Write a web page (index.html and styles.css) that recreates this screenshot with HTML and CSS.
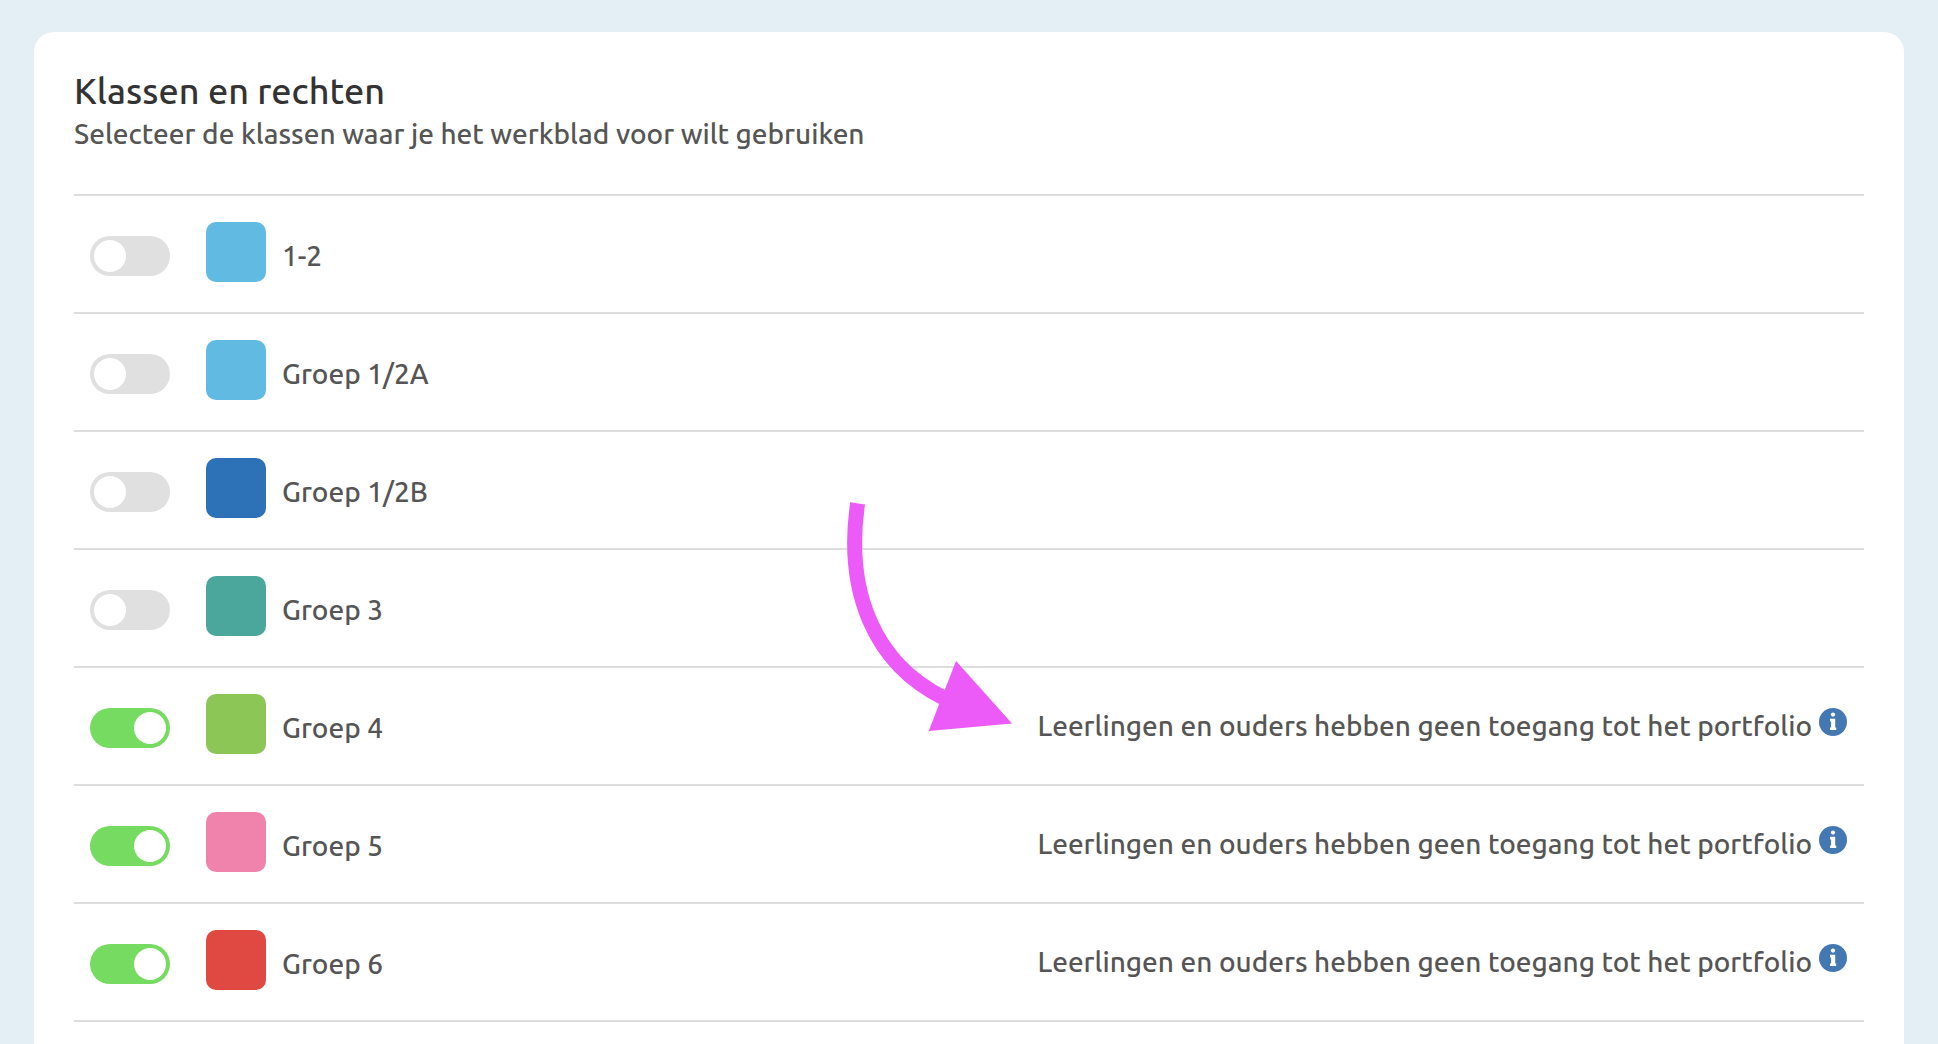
FILE: index.html
```html
<!DOCTYPE html>
<html lang="nl">
<head>
    <meta charset="UTF-8">
    <meta name="viewport" content="width=device-width, initial-scale=1.0">
    <title>Klassen en rechten</title>
    <link rel="stylesheet" href="styles.css">
</head>
<body>

    <svg class="sprite" aria-hidden="true">
        <symbol id="info" viewBox="0 0 28 28">
            <circle cx="14" cy="14" r="14" fill="#4478b3"/>
            <circle cx="14" cy="6.6" r="2.1" fill="#fff"/>
            <path fill="#fff" d="M11 10.8h5.2v8.7h1v2.6H11v-2.6h1.1v-6H11z"/>
        </symbol>
    </svg>

    <main class="card">
        <header>
            <h1>Klassen en rechten</h1>
            <p class="intro">Selecteer de klassen waar je het werkblad voor wilt gebruiken</p>
        </header>

        <ul class="class-list">
            <li>
                <input type="checkbox" class="toggle" id="klas-1">
                <span class="swatch light-blue"></span>
                <label for="klas-1">1-2</label>
            </li>
            <li>
                <input type="checkbox" class="toggle" id="klas-2">
                <span class="swatch light-blue"></span>
                <label for="klas-2">Groep 1/2A</label>
            </li>
            <li>
                <input type="checkbox" class="toggle" id="klas-3">
                <span class="swatch blue"></span>
                <label for="klas-3">Groep 1/2B</label>
            </li>
            <li>
                <input type="checkbox" class="toggle" id="klas-4">
                <span class="swatch teal"></span>
                <label for="klas-4">Groep 3</label>
            </li>
            <li>
                <input type="checkbox" class="toggle" id="klas-5" checked>
                <span class="swatch green"></span>
                <label for="klas-5">Groep 4</label>
                <div class="access">
                    <span>Leerlingen en ouders hebben geen toegang tot het portfolio</span>
                    <button type="button" class="info" aria-label="Meer informatie"><svg><use href="#info"/></svg></button>
                </div>
                <svg class="arrow" viewBox="840 500 176 234" aria-hidden="true">
                    <path d="M857.6 503.4C845 590 873 663 944 698" fill="none" stroke="#ec5af8" stroke-width="15"/>
                    <path d="M956 661L1012 723.5L928.7 731z" fill="#ec5af8"/>
                </svg>
            </li>
            <li>
                <input type="checkbox" class="toggle" id="klas-6" checked>
                <span class="swatch pink"></span>
                <label for="klas-6">Groep 5</label>
                <div class="access">
                    <span>Leerlingen en ouders hebben geen toegang tot het portfolio</span>
                    <button type="button" class="info" aria-label="Meer informatie"><svg><use href="#info"/></svg></button>
                </div>
            </li>
            <li>
                <input type="checkbox" class="toggle" id="klas-7" checked>
                <span class="swatch red"></span>
                <label for="klas-7">Groep 6</label>
                <div class="access">
                    <span>Leerlingen en ouders hebben geen toegang tot het portfolio</span>
                    <button type="button" class="info" aria-label="Meer informatie"><svg><use href="#info"/></svg></button>
                </div>
            </li>
        </ul>
    </main>

</body>
</html>
```
FILE: styles.css
```css
* {
    box-sizing: border-box;
}
body {
    display: flex;
    flex-direction: column;
    min-height: 100vh;
    margin: 0;
    padding: 32px 34px 0;
    background-color: #e4eff5;
    color: #555;
    font-family: Ubuntu, "Noto Sans", sans-serif;
    font-size: 28px;
    font-weight: 500;
    line-height: 40px;
}
.sprite {
    display: none;
}
.card {
    flex: 1;
    padding: 36px 40px 20px;
    border-radius: 20px 20px 0 0;
    background-color: white;
}
h1 {
    margin: 0;
    color: #333;
    font-size: 36px;
    font-weight: 500;
    line-height: 46px;
}
.intro {
    margin: 0;
}
.class-list {
    list-style: none;
    margin: 40px 0 0;
    padding: 0;
    border-top: 2px solid #ddd;
}
.class-list li {
    position: relative;
    display: flex;
    align-items: center;
    padding: 26px 16px 30px;
    border-bottom: 2px solid #ddd;
}
/* switch */
.toggle {
    appearance: none;
    width: 80px;
    height: 40px;
    margin: 8px 36px 0 0;
    padding: 4px;
    border-radius: 20px;
    background-color: #e0e0e0;
    cursor: pointer;
}
.toggle::before {
    content: "";
    display: block;
    width: 32px;
    height: 32px;
    border-radius: 50%;
    background-color: white;
}
.toggle:checked {
    background-color: #76db61;
}
.toggle:checked::before {
    margin-left: auto;
}
.swatch {
    width: 60px;
    height: 60px;
    margin-right: 16px;
    border-radius: 10px;
}
.light-blue { background-color: #60bae2; }
.blue { background-color: #2d71b7; }
.teal { background-color: #4ba69c; }
.green { background-color: #8cc657; }
.pink { background-color: #f083ac; }
.red { background-color: #e04942; }
label {
    padding-top: 8px;
}
.access {
    display: flex;
    align-items: center;
    gap: 6px;
    margin-left: auto;
    padding-top: 4px;
}
.info {
    width: 30px;
    height: 40px;
    padding: 0 1px 8px;
    border: none;
    background: none;
    cursor: pointer;
}
.info svg {
    display: block;
    width: 28px;
    height: 28px;
}
.arrow {
    position: absolute;
    top: -168px;
    right: 848px;
    width: 176px;
    height: 234px;
    pointer-events: none;
}
```
